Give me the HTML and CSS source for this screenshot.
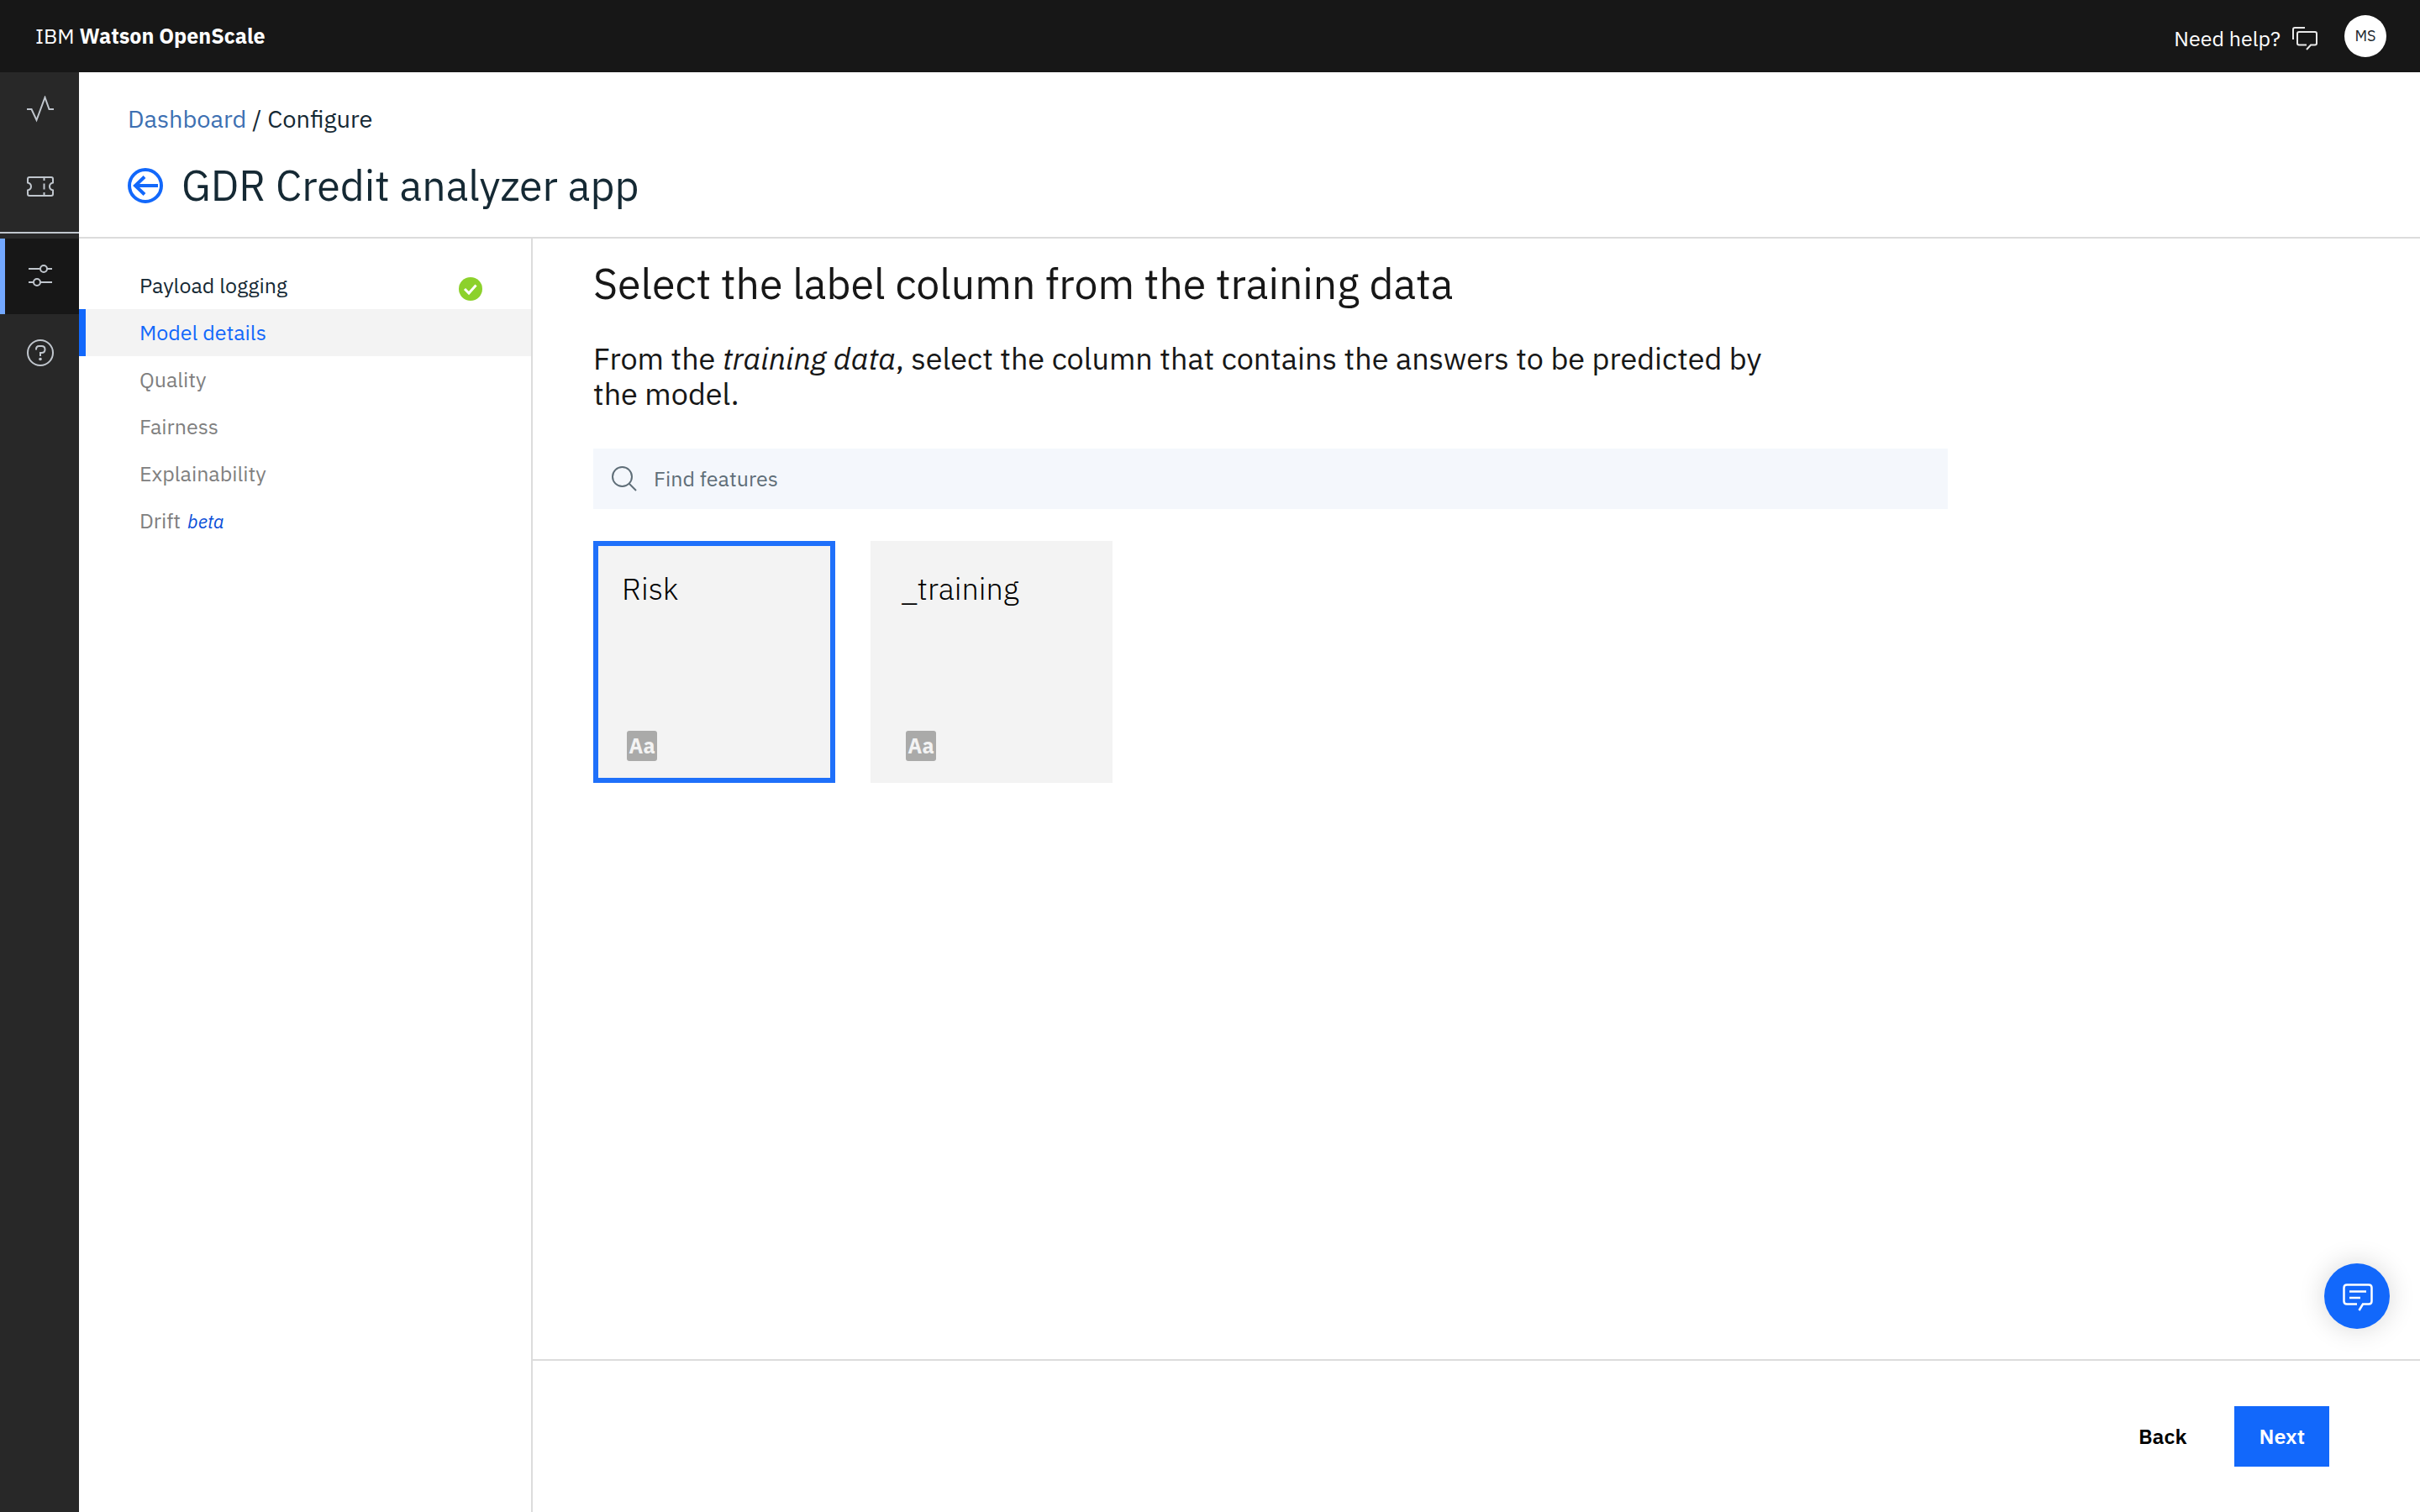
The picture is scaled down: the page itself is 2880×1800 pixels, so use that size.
FILE: index.html
```html
<!DOCTYPE html>
<html lang="en">
<head>
<meta charset="utf-8">
<meta name="viewport" content="width=device-width, initial-scale=1">
<title>IBM Watson OpenScale</title>
<link rel="stylesheet" href="styles.css">
</head>
<body>
<header class="topbar">
  <div class="brand">IBM <strong>Watson OpenScale</strong></div>
  <div class="topbar-actions">
    <button class="help-link" type="button">
      Need help?
      <svg class="help-icon" viewBox="0 0 30 28" fill="none" stroke="#e8e8e8" stroke-width="2" aria-hidden="true">
        <path d="M1 15V3Q1 1 3 1H15"/>
        <path d="M17 27L22 21.500H27Q29 21.500 29 19.500V8Q29 6 27 6H8Q6 6 6 8V19.500Q6 21.500 8 21.500H17"/>
      </svg>
    </button>
    <button class="avatar" type="button">MS</button>
  </div>
</header>
<div class="shell">
  <nav class="rail" aria-label="Product">
    <a class="rail-item" href="#" aria-label="Insights">
      <svg width="32" height="32" viewBox="0 0 32 32" fill="none" stroke="#c0c6cd" stroke-width="2" aria-hidden="true"><path d="M0 16H5.500L11.500 29L21.500 2L26.500 16H32"/></svg>
    </a>
    <a class="rail-item" href="#" aria-label="Tickets">
      <svg width="32" height="32" viewBox="0 0 32 32" fill="none" stroke="#c0c6cd" stroke-width="2" aria-hidden="true"><path d="M3 5H29Q31 5 31 7V11.500Q27 12.500 27 16T31 20.500V25Q31 27 29 27H3Q1 27 1 25V20.500Q5 19.500 5 16T1 11.500V7Q1 5 3 5Z"/><path d="M20.500 5V9M20.500 12.500V19.500M20.500 23V27"/></svg>
    </a>
    <hr class="rail-divider">
    <a class="rail-item rail-item-active" href="#" aria-label="Configure" aria-current="page">
      <svg width="32" height="32" viewBox="0 0 32 32" fill="none" stroke="#c0c6cd" stroke-width="2" aria-hidden="true"><path d="M2 8H15M24 8H30M2 24H7.500M16.500 24H30"/><circle cx="20" cy="8" r="4"/><circle cx="12" cy="24" r="4"/></svg>
    </a>
    <a class="rail-item" href="#" aria-label="Help">
      <svg width="32" height="32" viewBox="0 0 32 32" fill="none" stroke="#c0c6cd" stroke-width="2" aria-hidden="true"><circle cx="16" cy="16" r="15"/><path d="M11 12.500V12Q11 8 14.500 8H17.500Q21.500 8 21.500 12T17.500 16H16V20"/><circle cx="16" cy="23.500" r="1.800" fill="#c0c6cd" stroke="none"/></svg>
    </a>
  </nav>
  <div class="page">
    <div class="page-header">
      <nav class="breadcrumb" aria-label="Breadcrumb"><a href="#">Dashboard</a> / Configure</nav>
      <div class="page-title">
        <a class="back-icon" href="#" aria-label="Back to dashboard">
          <svg width="42" height="42" viewBox="0 0 42 42" fill="none" stroke="#1268fb" aria-hidden="true"><circle cx="21" cy="21" r="19" stroke-width="4"/><path d="M36 21H9M20 10.500L9 21L20 31.500" stroke-width="4"/></svg>
        </a>
        <h1>GDR Credit analyzer app</h1>
      </div>
    </div>
    <div class="workspace">
      <nav class="steps" aria-label="Configuration steps">
        <a class="step step-done" href="#">Payload logging
          <svg class="step-check" viewBox="0 0 28 28" aria-hidden="true"><circle cx="14" cy="14" r="14" fill="#8cd12b"/><path d="M7 14L12 19L20.500 9.500" fill="none" stroke="#fff" stroke-width="3"/></svg>
        </a>
        <a class="step step-current" href="#" aria-current="step">Model details</a>
        <a class="step" href="#">Quality</a>
        <a class="step" href="#">Fairness</a>
        <a class="step" href="#">Explainability</a>
        <a class="step" href="#">Drift <em class="beta">beta</em></a>
      </nav>
      <main class="main">
        <section class="content">
          <h2>Select the label column from the training data</h2>
          <p class="intro">From the <em>training data</em>, select the column that contains the answers to be predicted by the model.</p>
          <label class="search">
            <svg width="30" height="30" viewBox="0 0 30 30" fill="none" stroke="#5f6e78" stroke-width="2" aria-hidden="true"><circle cx="12.500" cy="12.500" r="11.500"/><path d="M20.500 20.500L29 29"/></svg>
            <input type="search" placeholder="Find features" aria-label="Find features">
          </label>
          <div class="cards">
            <button class="card card-selected" type="button" aria-pressed="true"><span class="card-name">Risk</span><span class="type-badge">Aa</span></button>
            <button class="card" type="button" aria-pressed="false"><span class="card-name">_training</span><span class="type-badge">Aa</span></button>
          </div>
        </section>
        <footer class="actions">
          <button class="button button-plain" type="button">Back</button>
          <button class="button button-primary" type="button">Next</button>
        </footer>
      </main>
    </div>
  </div>
</div>
<button class="chat" type="button" aria-label="Open chat">
  <svg width="36" height="33" viewBox="0 0 36 33" fill="none" stroke="#fff" stroke-width="2.500" aria-hidden="true"><path d="M17 24.500H5Q1.500 24.500 1.500 21V5Q1.500 1.500 5 1.500H31Q34.500 1.500 34.500 5V21Q34.500 24.500 31 24.500H24L19.500 32M8 9.500H28M8 17H21"/></svg>
</button>
</body>
</html>
```
FILE: styles.css
```css
* {
  box-sizing: border-box;
}

body {
  margin: 0;
  min-height: 100vh;
  display: flex;
  flex-direction: column;
  background: #fff;
  color: #152934;
  font-family: "IBM Plex Sans", Roboto, "Liberation Sans", sans-serif;
  font-size: 25px;
  line-height: 36px;
}

button,
input {
  font: inherit;
  color: inherit;
  border: 0;
  padding: 0;
  background: none;
}

button {
  cursor: pointer;
}

a {
  text-decoration: none;
}

svg {
  display: block;
  flex: none;
}

.topbar {
  display: flex;
  align-items: center;
  justify-content: space-between;
  height: 86px;
  padding: 0 40px 0 42px;
  background: #171717;
  color: #fff;
}

.topbar-actions {
  display: flex;
  align-items: center;
  gap: 32px;
}

.help-link {
  display: flex;
  align-items: center;
  gap: 14px;
  padding-top: 6px;
}

.help-icon {
  width: 30px;
  height: 28px;
}

.avatar {
  width: 50px;
  height: 50px;
  border-radius: 50%;
  background: #fff;
  color: #20262b;
  font-size: 18px;
}

.shell {
  flex: 1;
  display: flex;
}

.rail {
  flex: none;
  display: flex;
  flex-direction: column;
  gap: 2px;
  width: 94px;
  background: #282828;
}

.rail-item {
  display: flex;
  align-items: center;
  justify-content: center;
  height: 90px;
  padding: 0 0 2px 2px;
}

.rail-item-active {
  border-left: 6px solid #73a8ff;
  padding-right: 6px;
  background: #171717;
}

.rail-divider {
  width: 100%;
  height: 2px;
  margin: 6px 0 4px;
  border: 0;
  background: #c0c6cd;
}

.page {
  flex: 1;
  min-width: 0;
  display: flex;
  flex-direction: column;
}

.page-header {
  display: flex;
  flex-direction: column;
  gap: 30px;
  padding: 37px 58px 29px;
  border-bottom: 2px solid #dcdcdc;
}

.breadcrumb {
  font-size: 29px;
}

.breadcrumb a {
  color: #3d70b2;
}

.page-title {
  display: flex;
  align-items: center;
  gap: 22px;
}

h1,
h2 {
  margin: 0;
  font-size: 50px;
  font-weight: 400;
  line-height: 64px;
}

.workspace {
  flex: 1;
  display: flex;
}

.steps {
  flex: none;
  width: 540px;
  padding-top: 28px;
  border-right: 2px solid #dcdcdc;
}

.step {
  display: flex;
  align-items: baseline;
  gap: 8px;
  height: 56px;
  padding: 0 58px 0 72px;
  color: #808080;
  line-height: 56px;
}

.step-done {
  align-items: center;
  justify-content: space-between;
  color: #152934;
}

.step-check {
  width: 28px;
  height: 28px;
  margin-top: 8px;
}

.step-current {
  border-left: 8px solid #1268fb;
  padding-left: 64px;
  background: #f3f3f3;
  color: #1268fb;
}

.beta {
  color: #0b4fd8;
  font-size: 22px;
}

.main {
  flex: 1;
  min-width: 0;
  display: flex;
  flex-direction: column;
  color: #171717;
}

.content {
  flex: 1;
  padding: 22px 72px 48px;
}

.intro {
  max-width: 1440px;
  margin: 36px 0 44px;
  font-size: 36px;
  line-height: 42px;
}

.search {
  display: flex;
  align-items: center;
  gap: 20px;
  max-width: 1612px;
  height: 72px;
  padding: 0 22px;
  background: #f4f7fc;
  color: #5f6e78;
}

.search input {
  flex: 1;
  min-width: 0;
  outline-color: #1268fb;
}

.search input::placeholder {
  color: #5f6e78;
  opacity: 1;
}

.cards {
  display: flex;
  flex-wrap: wrap;
  gap: 42px;
  margin-top: 38px;
}

.card {
  display: flex;
  flex-direction: column;
  align-items: flex-start;
  justify-content: space-between;
  width: 288px;
  height: 288px;
  padding: 36px 36px 26px;
  background: #f3f3f3;
  color: #000;
}

.card-selected {
  border: 6px solid #1f70fa;
  padding: 30px 28px 20px;
}

.card-name {
  font-size: 36px;
  font-weight: 300;
  line-height: 42px;
}

.type-badge {
  width: 36px;
  height: 36px;
  margin-left: 6px;
  border-radius: 3px;
  background: #aaaaa9;
  color: #f3f3f3;
  font-size: 25px;
  font-weight: 700;
  line-height: 36px;
  text-align: center;
}

.actions {
  display: flex;
  justify-content: flex-end;
  gap: 28px;
  padding: 54px 108px;
  border-top: 2px solid #dcdcdc;
}

.button {
  height: 72px;
  padding: 0 29px;
  font-weight: 600;
}

.button-plain {
  color: #000;
}

.button-primary {
  background: #1268fb;
  color: #fff;
}

.chat {
  position: fixed;
  right: 36px;
  bottom: 218px;
  display: flex;
  align-items: center;
  justify-content: center;
  width: 78px;
  height: 78px;
  padding: 2px 0 0 2px;
  border-radius: 50%;
  background: #1268fb;
  box-shadow: 0 0 32px rgba(0, 0, 0, 0.16);
}
```
